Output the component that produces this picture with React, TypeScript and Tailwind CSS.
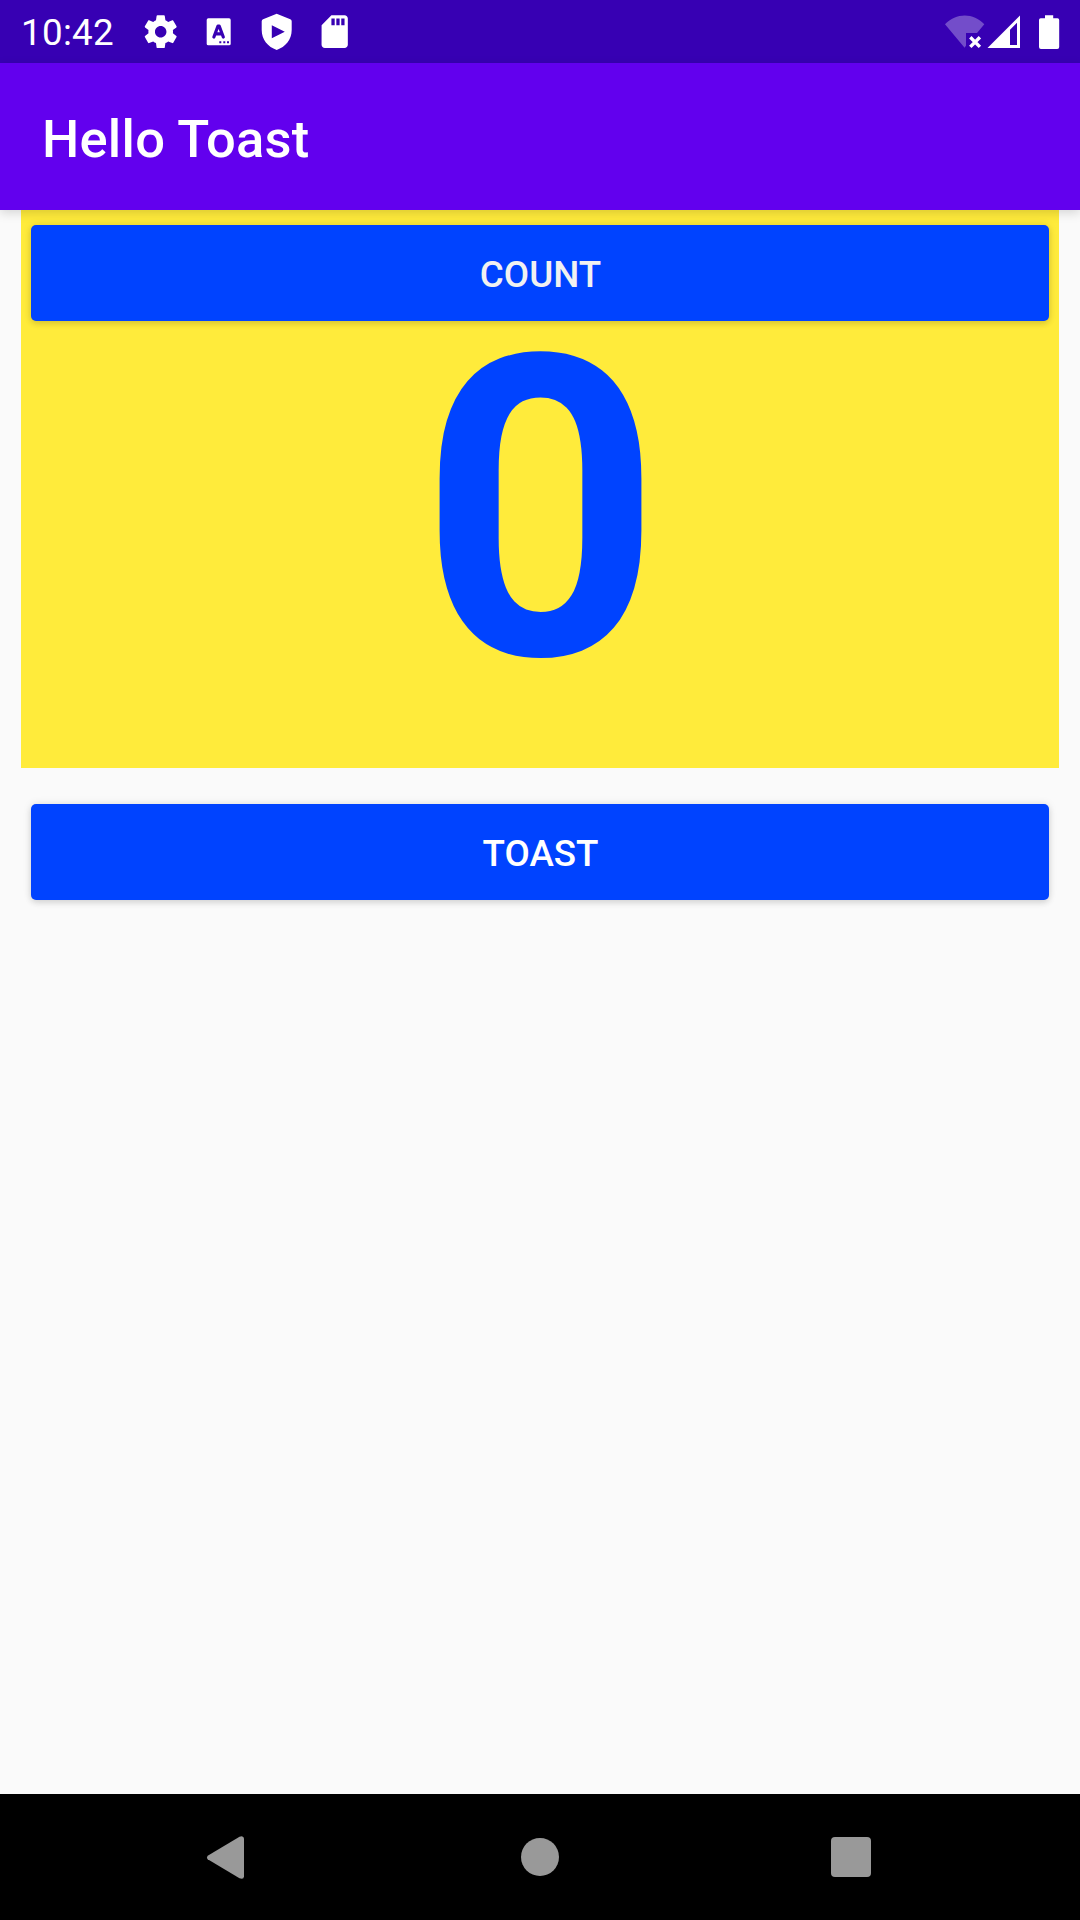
import type { ReactNode } from "react";

function StatusBar() {
  return (
    <header className="flex h-[63px] shrink-0 items-center bg-[#3700b3] pr-[20px] pl-[21px] text-white">
      <span className="w-[120.2px] pt-[2px] text-[36.75px] leading-[63px] tracking-[0.3px]">10:42</span>
      <div className="flex items-center gap-[18.7px]">
        <svg viewBox="0 0 24 24" className="size-[39.4px]" fill="currentColor" aria-label="Settings">
          <path d="M19.43 12.98c.04-.32.07-.64.07-.98s-.03-.66-.07-.98l2.11-1.65c.19-.15.24-.42.12-.64l-2-3.46c-.12-.22-.39-.3-.61-.22l-2.49 1c-.52-.4-1.08-.73-1.69-.98l-.38-2.65C14.46 2.18 14.25 2 14 2h-4c-.25 0-.46.18-.49.42l-.38 2.65c-.61.25-1.17.59-1.69.98l-2.49-1c-.23-.09-.49 0-.61.22l-2 3.46c-.13.22-.07.49.12.64l2.11 1.65c-.04.32-.07.65-.07.98s.03.66.07.98l-2.11 1.65c-.19.15-.24.42-.12.64l2 3.46c.12.22.39.3.61.22l2.49-1c.52.4 1.08.73 1.69.98l.38 2.65c.03.24.24.42.49.42h4c.25 0 .46-.18.49-.42l.38-2.65c.61-.25 1.17-.59 1.69-.98l2.49 1c.23.09.49 0 .61-.22l2-3.46c.12-.22.07-.49-.12-.64l-2.11-1.65zM12 15.5c-1.93 0-3.5-1.57-3.5-3.5s1.57-3.5 3.5-3.5 3.5 1.57 3.5 3.5-1.57 3.5-3.5 3.5z" />
        </svg>
        <svg viewBox="0 0 39.4 39.4" className="size-[39.4px]" aria-label="Keyboard">
          <rect x="7.7" y="6.3" width="24" height="27" rx="1.6" fill="currentColor" />
          <path d="M14.9 25 19 14h1.2L24.3 25M16.4 21.8h6.4" fill="none" stroke="#3700b3" strokeWidth="3.2" strokeLinecap="round" strokeLinejoin="round" />
          <path d="M20.3 29.3h2v2h-2zM24.3 29.3h2v2h-2zM28 29.3h2v2h-2z" fill="#3700b3" />
        </svg>
        <svg viewBox="0 0 39.4 39.4" className="size-[39.4px]" fill="currentColor" aria-label="Play Protect">
          <path fillRule="evenodd" d="M19.7 1.8 33.3 7.2Q34.7 7.8 34.7 9.2V18C34.7 27.5 28.5 35 19.7 37.9C10.9 35 4.7 27.5 4.7 18V9.2Q4.7 7.8 6.1 7.2ZM14.8 13.2V26.3L27.8 19.7Z" />
        </svg>
        <svg viewBox="0 0 24 24" className="size-[39.4px]" fill="currentColor" aria-label="SD card">
          <path d="M18 2h-8L4.02 8 4 20c0 1.1.9 2 2 2h12c1.1 0 2-.9 2-2V4c0-1.1-.9-2-2-2zm-6 6h-2V4h2v4zm3 0h-2V4h2v4zm3 0h-2V4h2v4z" />
        </svg>
      </div>
      <svg viewBox="944 12 116 38" className="ml-auto h-[38px] w-[116px]" fill="currentColor" aria-label="Wi-Fi off, mobile signal, battery full">
        <path d="M945 23.2C956 11.5 973.5 11.5 984.3 23.2L977 32H966V44.5L964.6 46.8Z" fillOpacity=".3" />
        <path d="m970.3 36.3 9.6 9.6m0-9.6-9.6 9.6" stroke="currentColor" strokeWidth="3.4" />
        <path fillRule="evenodd" d="M987.5 47 1020 14.5V47ZM1010 28.8V44H1017V21.8Z" />
        <path d="M1045 14.2h8.2v3h4.3q1.7 0 1.7 1.7V46q0 2-2 2h-16.2q-2 0-2-2V18.9q0-1.7 1.7-1.7h4.3Z" />
      </svg>
    </header>
  );
}

function RaisedButton({ children, className }: { children: ReactNode; className: string }) {
  return (
    <button className={`mx-[10px] flex h-[96px] items-center justify-center rounded-[5px] bg-[#0043ff] pt-[3px] pl-px text-[36.75px] font-medium shadow-[0_3px_6px_rgba(0,0,0,0.11),0_0_9px_rgba(0,0,0,0.1)] ${className}`}>
      {children}
    </button>
  );
}

export default function App() {
  return (
    <div className="flex h-[1920px] w-[1080px] flex-col overflow-hidden bg-[#fafafa] font-['Roboto',sans-serif]">
      <StatusBar />
      <div className="z-10 flex h-[147px] shrink-0 items-center bg-[#6200ee] pl-[42px] shadow-[0_3px_10px_rgba(0,0,0,0.15)]">
        <h1 className="pt-[4px] text-[52.5px] leading-[62px] font-medium tracking-[0.25px] text-white">Hello Toast</h1>
      </div>
      <main className="flex flex-1 flex-col px-[21px]">
        <section className="flex h-[558px] flex-col bg-[#ffeb3b] pt-[15px]">
          <RaisedButton className="text-[#f1f1f1]">COUNT</RaisedButton>
          <div className="mt-[4px] pl-px text-center text-[420px] leading-[371px] font-bold text-[#0043ff]">0</div>
        </section>
        <RaisedButton className="mt-[36px] text-white">TOAST</RaisedButton>
      </main>
      <nav className="flex h-[126px] shrink-0 items-center bg-black">
        <button className="ml-[206px] h-[43px] w-[39px]" aria-label="Back">
          <svg viewBox="0 0 39 43" className="h-[43px] w-[39px]" fill="#999">
            <path d="M1.7 19.7 33.5.7Q37.9-.8 38 2.8V40.2Q37.9 43.8 33.5 42.3L1.7 23.3Q.3 21.5 1.7 19.7Z" />
          </svg>
        </button>
        <button className="ml-[276px] size-[38px] rounded-full bg-[#999]" aria-label="Home" />
        <button className="ml-[272px] size-[40px] rounded-[4px] bg-[#999]" aria-label="Overview" />
      </nav>
    </div>
  );
}
